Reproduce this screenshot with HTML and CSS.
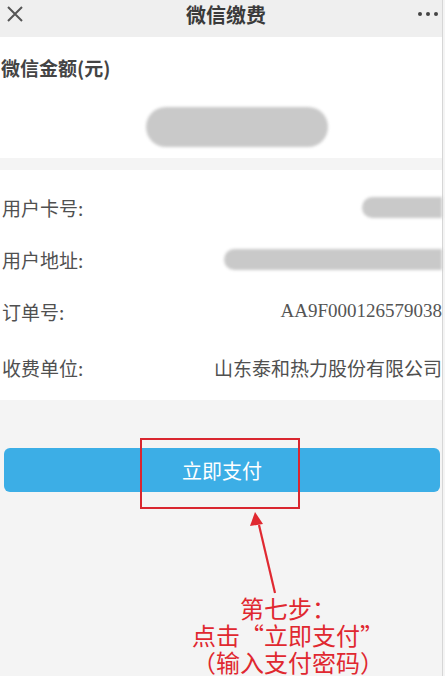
FILE: index.html
```html
<!DOCTYPE html>
<html lang="zh-CN">
<head>
<meta charset="utf-8">
<title>微信缴费</title>
<link rel="stylesheet" href="styles.css">
</head>
<body>
<div class="page">
  <header class="topbar">
    <svg class="close" width="18" height="16" viewBox="0 0 18 16"><path d="M2 1 L16 15 M16 1 L2 15" stroke="#555" stroke-width="2" fill="none"/></svg>
    <h1 class="title">微信缴费</h1>
    <div class="more"><span></span><span></span><span></span></div>
  </header>

  <section class="amount">
    <div class="amount-label">微信金额(元)</div>
    <div class="amount-value"><span class="blur blur-amount"></span></div>
  </section>

  <section class="details">
    <div class="row"><span class="label">用户卡号:</span><span class="blur blur-card"></span></div>
    <div class="row"><span class="label">用户地址:</span><span class="blur blur-addr"></span></div>
    <div class="row"><span class="label">订单号:</span><span class="order">AA9F000126579038</span></div>
    <div class="row row-last"><span class="label">收费单位:</span><span class="value">山东泰和热力股份有限公司</span></div>
  </section>

  <div class="actions">
    <button class="pay">立即支付</button>
  </div>

  <div class="note">
    <div>第七步：</div>
    <div>点击“立即支付”</div>
    <div>（输入支付密码）</div>
  </div>

  <div class="mark-box"></div>
  <svg class="mark-arrow" width="40" height="90" viewBox="0 0 40 90">
    <line x1="11" y1="14" x2="27" y2="82" stroke="#e02830" stroke-width="2.2"/>
    <polygon points="7,1 2,15 15,13" fill="#e02830"/>
  </svg>
</div>
</body>
</html>
```

FILE: styles.css
```css
html, body {
  margin: 0;
  padding: 0;
  background: #f4f4f4;
}
body {
  font-family: "Noto Sans CJK SC", "Noto Sans", sans-serif;
  width: 445px;
  height: 676px;
  overflow: hidden;
}
.page {
  position: relative;
  width: 442px;
  height: 676px;
  border-right: 1px solid #d6d6d6;
  background: #f4f4f4;
}
.topbar {
  height: 37px;
  background: #efefef;
  display: flex;
  align-items: center;
  justify-content: space-between;
  padding: 0 4px 0 6px;
  box-sizing: border-box;
}
.close {
  display: block;
  margin-top: -9px;
}
.title {
  margin: -8px 0 0 10px;
  font-size: 20px;
  font-weight: bold;
  color: #3a3a3a;
  line-height: 24px;
}
.more {
  display: flex;
  gap: 4px;
  margin-top: -9px;
}
.more span {
  width: 4px;
  height: 4px;
  border-radius: 50%;
  background: #444;
}
.amount {
  background: #fff;
  height: 121px;
  padding-top: 20px;
  box-sizing: border-box;
}
.amount-label {
  font-size: 19px;
  font-weight: bold;
  color: #444;
  line-height: 22px;
  padding-left: 1px;
}
.amount-value {
  display: flex;
  justify-content: center;
  padding-top: 28px;
  padding-left: 32px;
}
.blur {
  display: block;
  background: #c9c9c9;
  border-radius: 20px;
  filter: blur(1.5px);
}
.blur-amount {
  width: 182px;
  height: 40px;
}
.details {
  margin-top: 12px;
  background: #fff;
  padding: 11px 0 7px;
}
.row {
  height: 52px;
  display: flex;
  align-items: center;
  justify-content: space-between;
  padding-left: 2px;
}
.row-last {
  margin-top: 4px;
}
.label {
  font-size: 19px;
  color: #505050;
}
.value {
  font-size: 19px;
  color: #505050;
}
.order {
  font-family: "Liberation Serif", serif;
  font-size: 19px;
  color: #555;
}
.blur-card {
  width: 80px;
  height: 21px;
  border-radius: 11px 0 0 11px;
}
.blur-addr {
  width: 218px;
  height: 21px;
  border-radius: 11px 0 0 11px;
}
.actions {
  padding: 48px 2px 0 4px;
}
.pay {
  display: block;
  width: 436px;
  height: 44px;
  border: none;
  border-radius: 6px;
  background: #3caee6;
  color: #fff;
  font-family: "Noto Sans CJK SC", sans-serif;
  font-size: 20px;
  padding: 0;
}
.note {
  margin: 102px 0 0 148px;
  text-align: center;
  color: #e02830;
  font-size: 24px;
  line-height: 27px;
  width: 280px;
}
.mark-box {
  position: absolute;
  left: 140px;
  top: 438px;
  width: 156px;
  height: 67px;
  border: 2px solid #d9262f;
}
.mark-arrow {
  position: absolute;
  left: 248px;
  top: 511px;
}
```
